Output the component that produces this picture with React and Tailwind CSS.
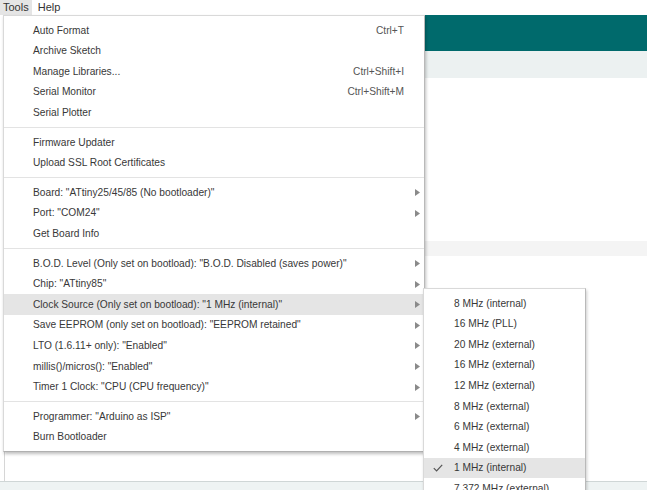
import React from 'react';

const mainMenu = [
    [
        { label: 'Auto Format', shortcut: 'Ctrl+T' },
        { label: 'Archive Sketch' },
        { label: 'Manage Libraries...', shortcut: 'Ctrl+Shift+I' },
        { label: 'Serial Monitor', shortcut: 'Ctrl+Shift+M' },
        { label: 'Serial Plotter' },
    ],
    [
        { label: 'Firmware Updater' },
        { label: 'Upload SSL Root Certificates' },
    ],
    [
        { label: 'Board: "ATtiny25/45/85 (No bootloader)"', sub: true },
        { label: 'Port: "COM24"', sub: true },
        { label: 'Get Board Info' },
    ],
    [
        { label: 'B.O.D. Level (Only set on bootload): "B.O.D. Disabled (saves power)"', sub: true },
        { label: 'Chip: "ATtiny85"', sub: true },
        { label: 'Clock Source (Only set on bootload): "1 MHz (internal)"', sub: true, active: true },
        { label: 'Save EEPROM (only set on bootload): "EEPROM retained"', sub: true },
        { label: 'LTO (1.6.11+ only): "Enabled"', sub: true },
        { label: 'millis()/micros(): "Enabled"', sub: true },
        { label: 'Timer 1 Clock: "CPU (CPU frequency)"', sub: true },
    ],
    [
        { label: 'Programmer: "Arduino as ISP"', sub: true },
        { label: 'Burn Bootloader' },
    ],
];

const clockOptions = [
    '8 MHz (internal)', '16 MHz (PLL)', '20 MHz (external)', '16 MHz (external)',
    '12 MHz (external)', '8 MHz (external)', '6 MHz (external)', '4 MHz (external)',
    '1 MHz (internal)', '7.372 MHz (external)',
];

const Arrow = () => (
    <svg width="5" height="7" viewBox="0 0 5 7" className="absolute left-[411px] top-[7px]">
        <path d="M0 0 L5 3.5 L0 7 Z" fill="#8a8a8a" />
    </svg>
);

const MenuRow = ({ item }) => (
    <div className={`relative h-[20.6px] flex items-center pl-[29px] pr-[20px] ${item.active ? 'bg-[#e5e5e5]' : ''}`}>
        <span className="flex-1 whitespace-nowrap">{item.label}</span>
        {item.shortcut && <span className="text-[#555] whitespace-nowrap">{item.shortcut}</span>}
        {item.sub && <Arrow />}
    </div>
);

export default function App() {
    return (
        <div className="relative w-[647px] h-[490px] overflow-hidden bg-white text-[10.2px] text-[#383838] font-['Liberation_Sans',Arial,sans-serif]">
            {/* menu bar */}
            <div className="h-[15px] flex items-center text-[11px] text-[#333]">
                <div className="h-full px-[3px] flex items-center bg-[#e5e5e5]">Tools</div>
                <div className="h-full px-[6px] flex items-center">Help</div>
            </div>

            {/* IDE behind the menu */}
            <div className="h-[475px] flex flex-col">
                <div className="flex-1 flex flex-col border-l border-[#d6d6d6] ml-[4px]">
                    <div className="h-[36px] bg-[#006a6c]"></div>
                    <div className="h-[27px] bg-[#ecf1f1]"></div>
                    <div className="h-[163px]"></div>
                    <div className="h-[15px] bg-[#f4f4f4]"></div>
                    <div className="flex-1"></div>
                </div>
                <div className="h-[9px] border-t border-[#cfd6d6] bg-[#eef3f3]"></div>
            </div>

            {/* Tools menu */}
            <div className="absolute left-[3px] top-[15px] w-[422px] bg-white border border-[#d9d9d9] border-r-[#b9b9b9] border-b-[#b0b0b0] py-[4px] shadow-[1px_2px_3px_rgba(0,0,0,0.25)]">
                {mainMenu.map((group, gi) => (
                    <div key={gi}>
                        {gi > 0 && <div className="h-[9px] flex items-center"><div className="h-px w-full bg-[#e3e3e3]"></div></div>}
                        {group.map(item => <MenuRow key={item.label} item={item} />)}
                    </div>
                ))}
            </div>

            {/* Clock Source submenu */}
            <div className="absolute left-[423px] top-[288px] w-[163px] h-[220px] bg-white border border-[#d9d9d9] border-r-[#b9b9b9] py-[4px] shadow-[1px_2px_3px_rgba(0,0,0,0.2)]">
                {clockOptions.map((opt, i) => {
                    const checked = i === 8;
                    return (
                        <div key={i} className={`relative h-[20.6px] flex items-center pl-[30px] whitespace-nowrap ${checked ? 'bg-[#e5e5e5]' : ''}`}>
                            {checked && (
                                <svg width="10" height="8" viewBox="0 0 10 8" className="absolute left-[9px] top-[6px]">
                                    <path d="M0.8 4.2 L3.6 7 L9.2 0.8" fill="none" stroke="#555" strokeWidth="1.2" />
                                </svg>
                            )}
                            {opt}
                        </div>
                    );
                })}
            </div>
        </div>
    );
}
